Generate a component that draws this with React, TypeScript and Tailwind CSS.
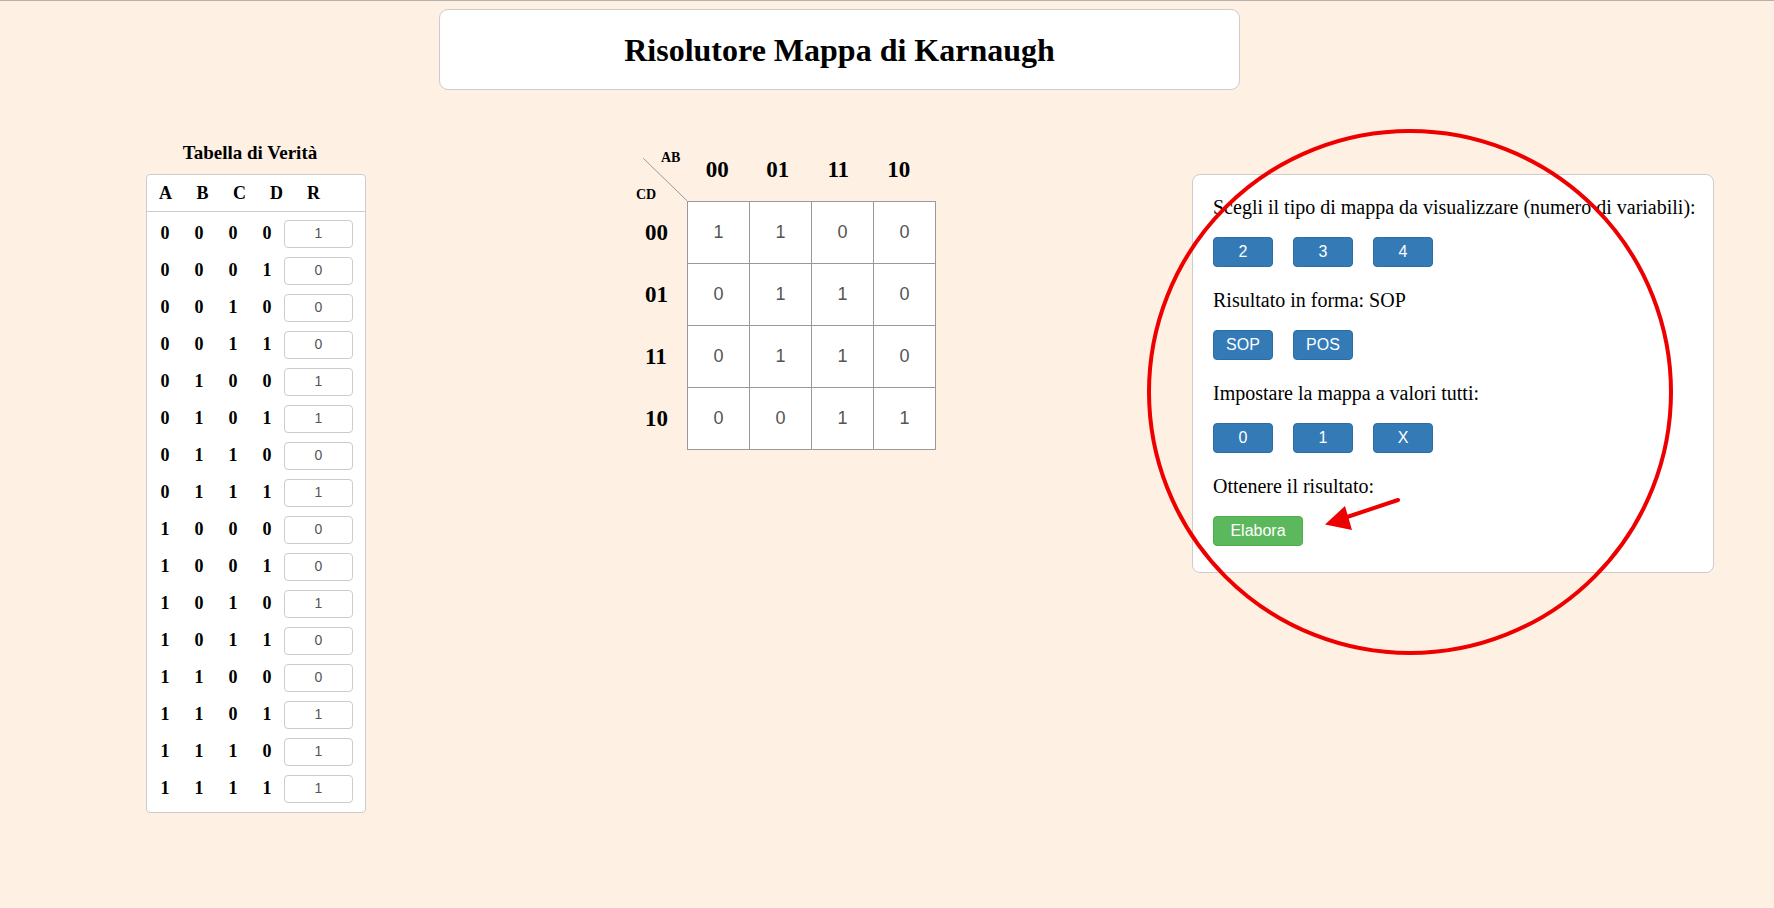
import React from "react";

const serif = { fontFamily: "'Liberation Serif', 'Times New Roman', serif" };
const sans = { fontFamily: "'Liberation Sans', Arial, sans-serif" };

const R_VALUES = [1, 0, 0, 0, 1, 1, 0, 1, 0, 0, 1, 0, 0, 1, 1, 1];
const GRAY = ["00", "01", "11", "10"];
const KMAP = [
  [1, 1, 0, 0],
  [0, 1, 1, 0],
  [0, 1, 1, 0],
  [0, 0, 1, 1],
];

function TruthTable() {
  return (
    <div className="w-[220px]">
      <h3 className="mt-[2px] pr-[12px] text-center text-[19px] font-bold leading-[22px] text-black" style={serif}>
        Tabella di Verità
      </h3>
      <div className="mt-[10px] rounded-[4px] border border-[#cccccc] bg-white">
        <div className="flex h-[37px] items-center border-b border-[#cccccc] text-[18px] font-bold text-black" style={serif}>
          {["A", "B", "C", "D", "R"].map((l) => (
            <div key={l} className="w-[37px] text-center">
              {l}
            </div>
          ))}
        </div>
        <div className="pt-[3px] pb-[5px]">
          {R_VALUES.map((r, i) => {
            const bits = i.toString(2).padStart(4, "0").split("");
            return (
              <div key={i} className="flex h-[37px] items-center pl-[1px]">
                {bits.map((b, j) => (
                  <div key={j} className="w-[34px] text-center text-[18px] font-bold text-black" style={serif}>
                    {b}
                  </div>
                ))}
                <div
                  className="flex h-[28px] w-[69px] items-center justify-center rounded-[4px] border border-[#cccccc] bg-white text-[14px] text-[#555555]"
                  style={sans}
                >
                  {r}
                </div>
              </div>
            );
          })}
        </div>
      </div>
    </div>
  );
}

function KarnaughMap() {
  return (
    <div className="w-[306px]">
      <div className="flex h-[61px]">
        <div className="relative h-[61px] w-[57px]">
          <svg className="absolute left-0 top-0" width="57" height="61" viewBox="0 0 57 61">
            <line x1="13.3" y1="18.3" x2="57.3" y2="61" stroke="#999999" strokeWidth="1" />
          </svg>
          <span
            className="absolute left-[31px] top-[9px] text-[14px] font-bold leading-[18px] text-black"
            style={serif}
          >
            AB
          </span>
          <span
            className="absolute left-[6px] top-[46px] text-[14px] font-bold leading-[18px] text-black"
            style={serif}
          >
            CD
          </span>
        </div>
        {GRAY.map((g) => (
          <div
            key={g}
            className="flex w-[60.5px] items-center justify-center text-[23px] font-bold text-black"
            style={serif}
          >
            {g}
          </div>
        ))}
      </div>
      <div className="flex">
        <div className="w-[57px] pt-[1px]">
          {GRAY.map((g) => (
            <div key={g} className="flex h-[62px] items-center pl-[15px] text-[23px] font-bold text-black" style={serif}>
              {g}
            </div>
          ))}
        </div>
        <div className="grid grid-cols-4 border-l border-t border-[#999999] bg-white">
          {KMAP.flat().map((v, i) => (
            <div
              key={i}
              className="flex h-[62px] w-[62px] items-center justify-center border-b border-r border-[#999999] text-[18px] text-[#555555]"
              style={sans}
            >
              {v}
            </div>
          ))}
        </div>
      </div>
    </div>
  );
}

function Btn({ label, green = false, wide = false }: { label: string; green?: boolean; wide?: boolean }) {
  return (
    <button
      className={`${wide ? "w-[90px]" : "w-[60px]"} mr-5 h-[30px] rounded-[4px] border text-[16px] text-white ${
        green ? "border-[#4cae4c] bg-[#5cb85c]" : "border-[#2e6da4] bg-[#337ab7]"
      }`}
      style={sans}
    >
      {label}
    </button>
  );
}

function Controls() {
  const blocks: { text: string; buttons: string[]; green?: boolean }[] = [
    { text: "Scegli il tipo di mappa da visualizzare (numero di variabili):", buttons: ["2", "3", "4"] },
    { text: "Risultato in forma: SOP", buttons: ["SOP", "POS"] },
    { text: "Impostare la mappa a valori tutti:", buttons: ["0", "1", "X"] },
    { text: "Ottenere il risultato:", buttons: ["Elabora"], green: true },
  ];
  return (
    <div className="w-[522px] rounded-lg border border-[#cccccc] bg-white px-5 pt-5 pb-[26px]">
      {blocks.map((b, i) => (
        <div key={i} className={i < blocks.length - 1 ? "mb-[21px]" : ""}>
          <p className="whitespace-nowrap text-[20px] leading-[24px] text-black" style={serif}>
            {b.text}
          </p>
          <div className="mt-[18px] flex">
            {b.buttons.map((l) => (
              <Btn key={l} label={l} green={b.green} wide={b.green} />
            ))}
          </div>
        </div>
      ))}
    </div>
  );
}

export default function App() {
  return (
    <div className="relative min-h-[908px] overflow-hidden border-t border-[#b9aea8] bg-[#fef1e3]">
      <div
        className="ml-[439px] mt-2 flex h-[81px] w-[801px] items-center justify-center rounded-[9px] border border-[#cccccc] bg-white"
      >
        <h1 className="text-[32px] font-bold text-black" style={serif}>
          Risolutore Mappa di Karnaugh
        </h1>
      </div>

      <div className="mt-[50px] flex items-start">
        <div className="ml-[146px]">
          <TruthTable />
        </div>
        <div className="ml-[264px]">
          <KarnaughMap />
        </div>
        <div className="ml-[256px] mt-[34px]">
          <Controls />
        </div>
      </div>

      {/* red annotation over the controls */}
      <svg className="pointer-events-none absolute left-0 top-0" width="1774" height="908" viewBox="0 0 1774 908">
        <ellipse cx="1410" cy="391" rx="261" ry="261" fill="none" stroke="#ee0000" strokeWidth="4" />
        <line x1="1398" y1="499" x2="1344" y2="517" stroke="#ee0000" strokeWidth="4" strokeLinecap="round" />
        <polygon points="1325,523.5 1345,505 1352,529" fill="#ee0000" />
      </svg>
    </div>
  );
}
